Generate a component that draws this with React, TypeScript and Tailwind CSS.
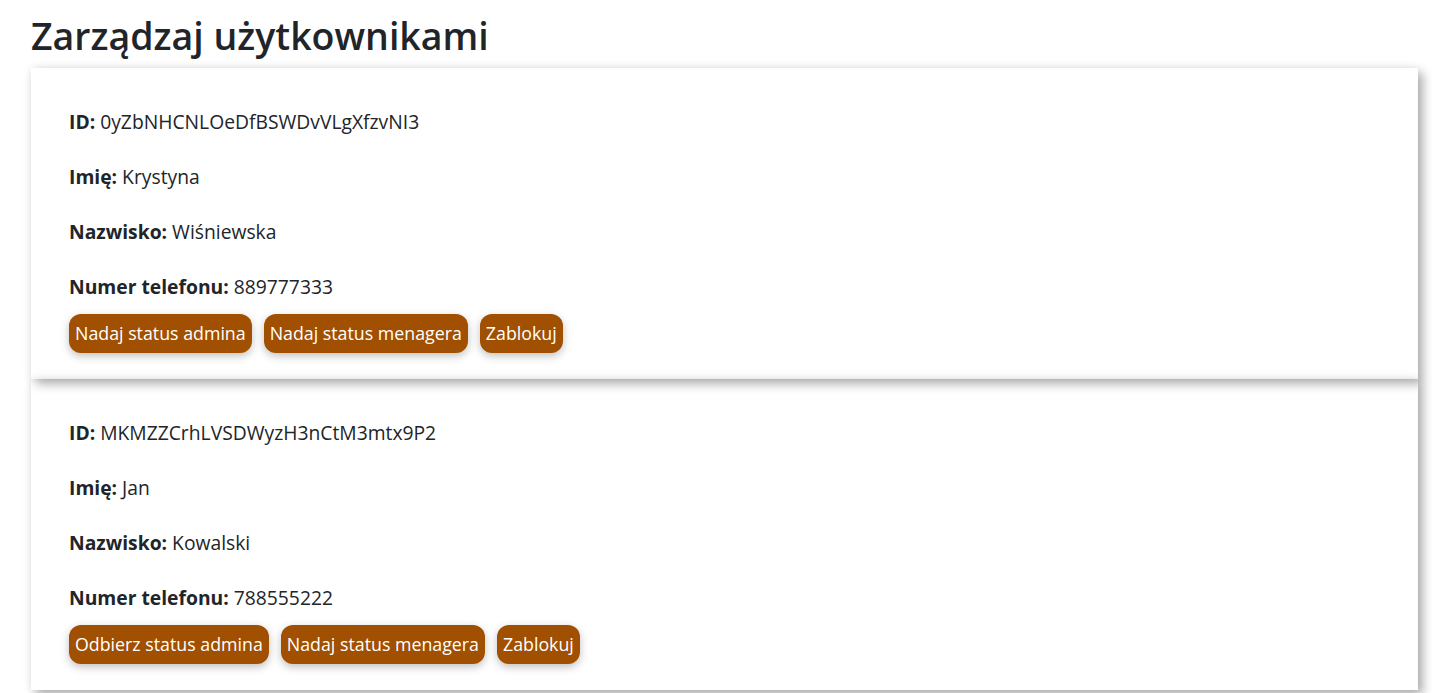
const users = [
  {
    id: '0yZbNHCNLOeDfBSWDvVLgXfzvNI3',
    name: 'Krystyna',
    surname: 'Wiśniewska',
    phone: '889777333',
    isAdmin: false,
  },
  {
    id: 'MKMZZCrhLVSDWyzH3nCtM3mtx9P2',
    name: 'Jan',
    surname: 'Kowalski',
    phone: '788555222',
    isAdmin: true,
  },
];

function ActionButton({ label }: { label: string }) {
  return (
    <button className="rounded-xl bg-[#a14f00] px-[6px] py-[6px] text-[17.8px] leading-[27px] text-white shadow-[0_3px_8px_rgba(0,0,0,0.25)]">
      {label}
    </button>
  );
}

function UserCard({ user }: { user: (typeof users)[number] }) {
  return (
    <div className="px-[38px] pt-[40px] pb-[26px] text-[19.3px] shadow-[5px_5px_10px_rgba(0,0,0,0.3),0_0_10px_rgba(0,0,0,0.08)]">
      <p className="mb-[28px] leading-[27px]">
        <b>ID:</b> {user.id}
      </p>
      <p className="mb-[28px] leading-[27px]">
        <b>Imię:</b> {user.name}
      </p>
      <p className="mb-[28px] leading-[27px]">
        <b>Nazwisko:</b> {user.surname}
      </p>
      <p className="mb-[14px] leading-[27px]">
        <b>Numer telefonu:</b> {user.phone}
      </p>
      <div className="flex gap-3">
        <ActionButton label={user.isAdmin ? 'Odbierz status admina' : 'Nadaj status admina'} />
        <ActionButton label="Nadaj status menagera" />
        <ActionButton label="Zablokuj" />
      </div>
    </div>
  );
}

export default function App() {
  return (
    <div className="min-h-screen bg-white pl-[31px] pr-[14px] pt-[12px] text-[#212529] [font-family:'Open_Sans',sans-serif]">
      <h1 className="mb-2 text-[37.5px] font-semibold leading-[48px]">Zarządzaj użytkownikami</h1>
      {users.map(u => (
        <UserCard key={u.id} user={u} />
      ))}
    </div>
  );
}
